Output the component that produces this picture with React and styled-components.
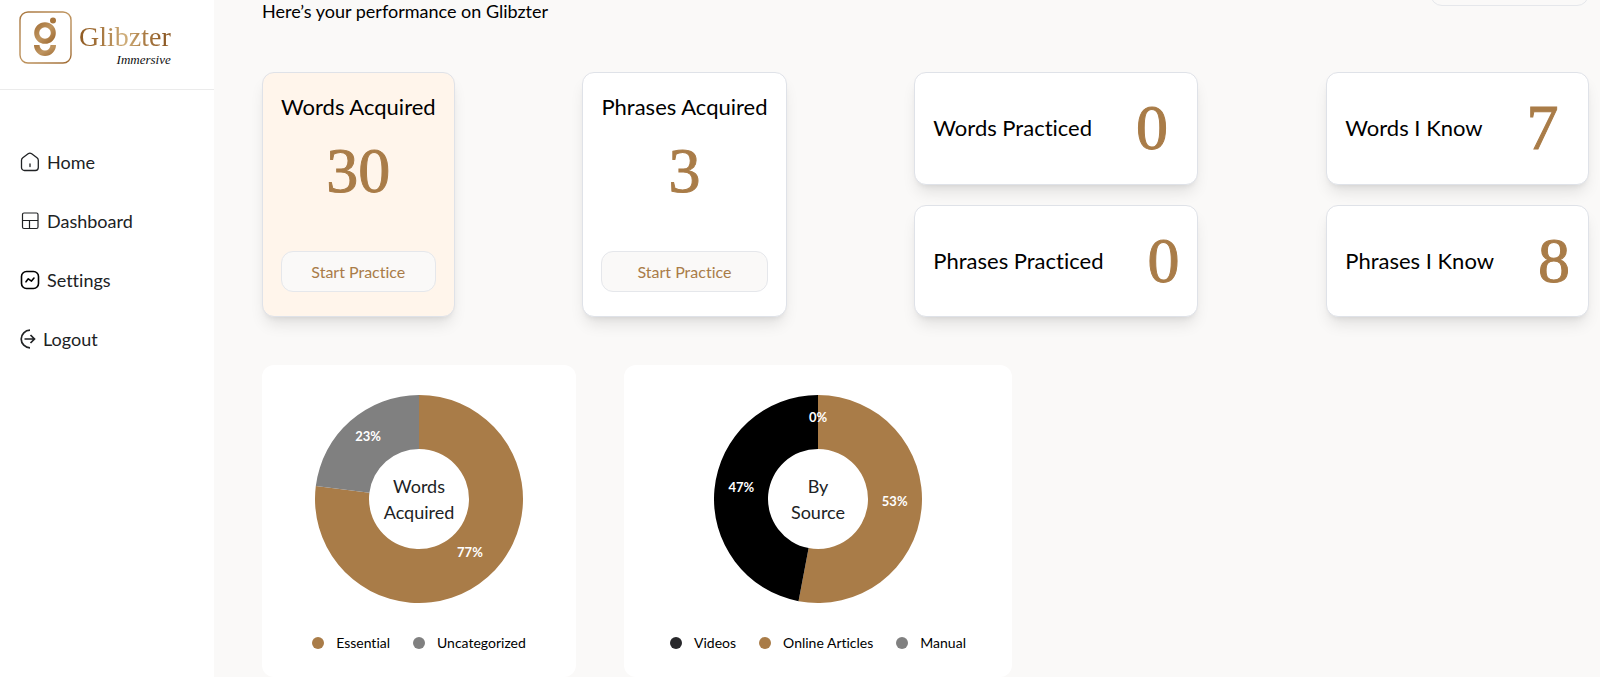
import React from "react";
import styled, { createGlobalStyle } from "styled-components";

const GlobalStyle = createGlobalStyle`
  * {
    box-sizing: border-box;
  }
  body {
    margin: 0;
    background-color: #faf9f8;
    font-family: Lato, "Open Sans", sans-serif;
    font-variant-ligatures: none;
    color: #000;
  }
`;

const Container = styled.div`
  display: flex;
  align-items: stretch;
  min-height: 100vh;
`;

const Sidebar = styled.aside`
  width: 214px;
  flex-shrink: 0;
  background-color: #fff;
`;

const Brand = styled.a`
  display: flex;
  gap: 7px;
  height: 90px;
  padding: 11px 19px;
  border-bottom: 1px solid #ebebeb;
  text-decoration: none;
`;

const BrandText = styled.div`
  display: flex;
  flex-direction: column;
  align-items: flex-end;
  padding-top: 10px;
  font-family: "Liberation Serif", serif;
`;

const BrandName = styled.span`
  font-size: 28px;
  line-height: 32px;
  background: linear-gradient(90deg, #8f5a22 0%, #a87840 25%, #cfae7a 50%, #ad7e46 70%, #85501c 100%);
  background-clip: text;
  -webkit-background-clip: text;
  color: transparent;
`;

const BrandTag = styled.span`
  font-size: 13px;
  line-height: 14px;
  font-style: italic;
  color: #111;
`;

const Nav = styled.nav`
  display: flex;
  flex-direction: column;
  gap: 35px;
  padding: 60px 20px;
`;

const NavLink = styled.a`
  display: flex;
  align-items: center;
  gap: ${({ $tight }) => ($tight ? "3px" : "7px")};
  font-size: 18px;
  line-height: 24px;
  color: #202224;
  text-decoration: none;
`;

const Main = styled.main`
  flex: 1;
  min-width: 0;
  padding: 0 11px 0 48px;
`;

const Header = styled.header`
  display: flex;
  justify-content: space-between;
  align-items: flex-start;
  height: 72px;
`;

const Subtitle = styled.p`
  margin: 0;
  font-size: 18px;
  line-height: 22px;
`;

const HeaderBox = styled.div`
  width: 159px;
  height: 41px;
  margin-top: -35px;
  border: 1px solid #e5e7eb;
  border-radius: 12px;
`;

const Stats = styled.section`
  display: flex;
  justify-content: space-between;
`;

const Column = styled.div`
  display: flex;
  flex-direction: column;
  gap: 20px;
`;

const Card = styled.div`
  border: 1px solid #dfe2e8;
  border-radius: 12px;
  background-color: ${({ $highlight }) => ($highlight ? "#fff5eb" : "#fff")};
  box-shadow: 0 10px 15px -3px rgba(0, 0, 0, 0.1), 0 4px 6px -4px rgba(0, 0, 0, 0.1);
`;

const TallCard = styled(Card)`
  display: flex;
  flex-direction: column;
  align-items: center;
  gap: 14px;
  height: 245px;
  padding: 20px 18px 24px;
`;

const WideCard = styled(Card)`
  flex: 1;
  display: flex;
  align-items: center;
  gap: 44px;
  padding: 0 18px;
`;

const CardTitle = styled.h2`
  margin: 0;
  font-size: 22px;
  line-height: 28px;
  font-weight: 400;
`;

const Number = styled.span`
  font-family: "Liberation Serif", serif;
  font-size: 64px;
  line-height: 72px;
  color: #a97c48;
  -webkit-text-stroke: 1px #a97c48;
`;

const Button = styled.button`
  width: 100%;
  height: 41px;
  margin-top: auto;
  border: 1px solid #e5e7eb;
  border-radius: 12px;
  background-color: #faf9f8;
  font-family: inherit;
  font-size: 16px;
  font-variant-ligatures: none;
  color: #a97c48;
  cursor: pointer;
`;

const Charts = styled.section`
  display: flex;
  gap: 48px;
  margin-top: 48px;
`;

const ChartCard = styled.div`
  display: flex;
  flex-direction: column;
  align-items: center;
  gap: 29px;
  min-width: 314px;
  padding: 30px 46px 23px;
  border-radius: 12px;
  background-color: #fff;
`;

const Chart = styled.svg`
  display: block;
  width: 208px;
  height: 208px;
`;

const Percent = styled.text`
  font-size: 13px;
  font-weight: 700;
  fill: #fff;
  text-anchor: middle;
`;

const Center = styled.text`
  font-size: 18px;
  fill: #202224;
  text-anchor: middle;
`;

const Legend = styled.ul`
  display: flex;
  gap: 23px;
  margin: 0;
  padding: 0;
  list-style: none;
`;

const LegendItem = styled.li`
  display: flex;
  align-items: center;
  gap: 12px;
  font-size: 14px;
  line-height: 22px;
`;

const Dot = styled.span`
  width: 12px;
  height: 12px;
  border-radius: 50%;
  background-color: ${({ $color }) => $color};
`;

const Logo = () => (
  <svg width="53" height="53" viewBox="0 0 53 53" fill="none">
    <defs>
      <linearGradient id="gold" x1="0" y1="0" x2="1" y2="1">
        <stop offset="0" stopColor="#a8763e" />
        <stop offset="0.5" stopColor="#bf9560" />
        <stop offset="1" stopColor="#a06c34" />
      </linearGradient>
    </defs>
    <rect x="1" y="1" width="51" height="51" rx="8" stroke="url(#gold)" strokeWidth="1.4" />
    <circle cx="26" cy="22" r="8.3" stroke="url(#gold)" strokeWidth="5" />
    <circle cx="34" cy="9.5" r="3" fill="#a8763e" />
    <path d="M15 34h5.500a5.500 5.500 0 0 0 11 0H37a11 11 0 0 1-22 0z" fill="url(#gold)" />
  </svg>
);

const HomeIcon = () => (
  <svg width="20" height="20" viewBox="0 0 20 20" fill="none" stroke="#202224" strokeWidth="1.300" strokeLinecap="round" strokeLinejoin="round">
    <path d="M1.500 8.300c0-1 .5-1.900 1.300-2.500l5.300-4a3 3 0 0 1 3.600 0l5.300 4c.8.6 1.300 1.500 1.300 2.500v7.200a3 3 0 0 1-3 3H4.500a3 3 0 0 1-3-3z" />
    <path d="M10 12v2.500" />
  </svg>
);

const DashboardIcon = () => (
  <svg width="20" height="20" viewBox="0 0 20 20" fill="none" stroke="#202224" strokeWidth="1.200">
    <rect x="2.500" y="2" width="15.500" height="15.500" rx="1.500" />
    <path d="M2.500 9.500H18M9.500 9.500v8" />
  </svg>
);

const SettingsIcon = () => (
  <svg width="20" height="20" viewBox="0 0 20 20" fill="none" stroke="#000" strokeWidth="1.600" strokeLinecap="round" strokeLinejoin="round">
    <rect x="1.500" y="1.500" width="17" height="17" rx="5" />
    <path d="M6 11.800l2.300-3 3.200 2.300L14 8" />
  </svg>
);

const LogoutIcon = () => (
  <svg width="20" height="20" viewBox="0 0 20 20" fill="none" stroke="#202224" strokeWidth="1.700">
    <path d="M10 1.200a8.800 8.800 0 0 0 0 17.600" />
    <path d="M4.500 10h10M10.500 6l4 4-4 4" />
  </svg>
);

const links = [
  { name: "Home", icon: <HomeIcon /> },
  { name: "Dashboard", icon: <DashboardIcon /> },
  { name: "Settings", icon: <SettingsIcon /> },
  { name: "Logout", icon: <LogoutIcon />, tight: true },
];

const words = [
  { name: "Essential", value: 77, color: "#a97c48" },
  { name: "Uncategorized", value: 23, color: "#808080" },
];

const sources = [
  { name: "Online Articles", value: 53, color: "#a97c48" },
  { name: "Videos", value: 47, color: "#000" },
  { name: "Manual", value: 0, color: "#808080" },
];

const wordsLegend = [
  { name: "Essential", color: "#a97c48" },
  { name: "Uncategorized", color: "#808080" },
];

const sourcesLegend = [
  { name: "Videos", color: "#28282b" },
  { name: "Online Articles", color: "#a97c48" },
  { name: "Manual", color: "#808080" },
];

// point on a circle around the chart center, 0 is at the top
const point = (percent, r) => {
  const angle = (percent / 100) * 2 * Math.PI;
  return [104 + r * Math.sin(angle), 104 - r * Math.cos(angle)];
};

const slicePath = (from, to) => {
  const large = to - from > 50 ? 1 : 0;
  const a = point(from, 104);
  const b = point(to, 104);
  const c = point(to, 50);
  const d = point(from, 50);
  return `M${a} A104 104 0 ${large} 1 ${b} L${c} A50 50 0 ${large} 0 ${d} Z`;
};

const Donut = ({ data, title }) => {
  let total = 0;
  const slices = data.map((item) => {
    const from = total;
    total += item.value;
    return { ...item, from, to: total, label: point((from + total) / 2, 77) };
  });

  return (
    <Chart viewBox="0 0 208 208">
      {slices.map((s) => (
        <path key={s.name} d={slicePath(s.from, s.to)} fill={s.color} />
      ))}
      {slices.map((s) => (
        <Percent key={s.name} x={s.label[0]} y={s.label[1]}>
          {s.value}%
        </Percent>
      ))}
      <Center x="104" y="98">{title[0]}</Center>
      <Center x="104" y="124">{title[1]}</Center>
    </Chart>
  );
};

const ChartBox = ({ data, title, legend }) => (
  <ChartCard>
    <Donut data={data} title={title} />
    <Legend>
      {legend.map((item) => (
        <LegendItem key={item.name}>
          <Dot $color={item.color} />
          {item.name}
        </LegendItem>
      ))}
    </Legend>
  </ChartCard>
);

const Acquired = ({ title, value, highlight }) => (
  <TallCard $highlight={highlight}>
    <CardTitle>{title}</CardTitle>
    <Number>{value}</Number>
    <Button>Start Practice</Button>
  </TallCard>
);

const Stat = ({ title, value }) => (
  <WideCard>
    <CardTitle>{title}</CardTitle>
    <Number>{value}</Number>
  </WideCard>
);

const App = () => {
  return (
    <>
      <GlobalStyle />
      <Container>
        <Sidebar>
          <Brand href="#">
            <Logo />
            <BrandText>
              <BrandName>Glibzter</BrandName>
              <BrandTag>Immersive</BrandTag>
            </BrandText>
          </Brand>
          <Nav>
            {links.map((link) => (
              <NavLink key={link.name} href="#" $tight={link.tight}>
                {link.icon}
                {link.name}
              </NavLink>
            ))}
          </Nav>
        </Sidebar>
        <Main>
          <Header>
            <Subtitle>Here’s your performance on Glibzter</Subtitle>
            <HeaderBox />
          </Header>
          <Stats>
            <Acquired title="Words Acquired" value={30} highlight />
            <Acquired title="Phrases Acquired" value={3} />
            <Column>
              <Stat title="Words Practiced" value={0} />
              <Stat title="Phrases Practiced" value={0} />
            </Column>
            <Column>
              <Stat title="Words I Know" value={7} />
              <Stat title="Phrases I Know" value={8} />
            </Column>
          </Stats>
          <Charts>
            <ChartBox data={words} title={["Words", "Acquired"]} legend={wordsLegend} />
            <ChartBox data={sources} title={["By", "Source"]} legend={sourcesLegend} />
          </Charts>
        </Main>
      </Container>
    </>
  );
};

export default App;
